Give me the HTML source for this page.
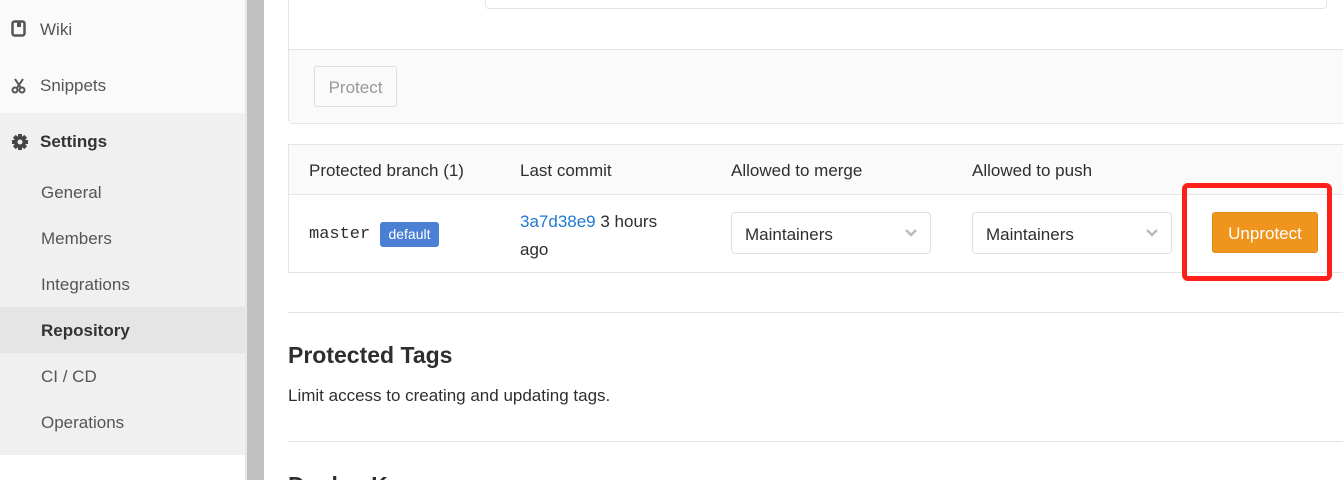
<!DOCTYPE html><html><head><style>
html,body{margin:0;width:1343px;height:480px;overflow:hidden}
body{background:#fff;font-family:"Liberation Sans",sans-serif;color:#2e2e2e;position:relative}
.a{position:absolute}
.nav{font-size:17px;color:#555}
</style></head><body>
<div class="a" style="left:0;top:0;width:245px;height:113px;background:#fafafa"></div>
<div class="a" style="left:0;top:113px;width:245px;height:342px;background:#f0f0f0"></div>
<div class="a" style="left:0;top:307px;width:245px;height:46px;background:#e5e5e5"></div>
<div class="a" style="left:245px;top:0;width:2px;height:480px;background:#e8e8e8"></div>
<div class="a" style="left:247px;top:0;width:17px;height:480px;background:#c1c1c1"></div>
<svg class="a" style="left:11px;top:20px" width="16" height="18"><rect x="1.5" y="1.5" width="12" height="14" rx="2" fill="none" stroke="#555" stroke-width="2.5"/><rect x="6" y="2" width="4" height="5" fill="#555"/></svg>
<div class="a nav" style="left:40px;top:20px">Wiki</div>
<svg class="a" style="left:11px;top:77px" width="16" height="18"><path d="M4 2l6 9M12 2l-6 9" stroke="#555" stroke-width="2"/><circle cx="4" cy="13" r="2.5" fill="none" stroke="#555" stroke-width="2"/><circle cx="11" cy="13" r="2.5" fill="none" stroke="#555" stroke-width="2"/></svg>
<div class="a nav" style="left:40px;top:76px">Snippets</div>
<svg class="a" style="left:11px;top:133px" width="18" height="18" viewBox="0 0 18 18"><g fill="#444"><circle cx="9" cy="9" r="6"/><rect x="7" y="1" width="4" height="16"/><rect x="1" y="7" width="16" height="4"/><rect x="7" y="1" width="4" height="16" transform="rotate(45 9 9)"/><rect x="7" y="1" width="4" height="16" transform="rotate(-45 9 9)"/></g><circle cx="9" cy="9" r="2.5" fill="#f0f0f0"/></svg>
<div class="a nav" style="left:40px;top:132px;font-weight:bold;color:#333">Settings</div>
<div class="a nav" style="left:41px;top:183px">General</div>
<div class="a nav" style="left:41px;top:229px">Members</div>
<div class="a nav" style="left:41px;top:275px">Integrations</div>
<div class="a nav" style="left:41px;top:321px;font-weight:bold;color:#333">Repository</div>
<div class="a nav" style="left:41px;top:367px">CI / CD</div>
<div class="a nav" style="left:41px;top:413px">Operations</div>

<div class="a" style="left:288px;top:-5px;width:1060px;height:127px;border:1px solid #e5e5e5;border-radius:4px;background:#fff"></div>
<div class="a" style="left:289px;top:49px;width:1060px;height:73px;background:#fafafa;border-top:1px solid #e5e5e5"></div>
<div class="a" style="left:485px;top:-5px;width:840px;height:12px;border:1px solid #e5e5e5;border-radius:4px;background:#fff"></div>
<div class="a" style="left:314px;top:66px;width:81px;height:39px;border:1px solid #ddd;border-radius:3px;background:#fafafa;color:#999;font-size:17px;line-height:41px;text-align:center">Protect</div>

<div class="a" style="left:288px;top:144px;width:1060px;height:127px;border:1px solid #e5e5e5"></div>
<div class="a" style="left:289px;top:145px;width:1060px;height:49px;background:#fafafa;border-bottom:1px solid #e5e5e5"></div>
<div class="a" style="left:309px;top:161px;font-size:17px">Protected branch (1)</div>
<div class="a" style="left:520px;top:161px;font-size:17px">Last commit</div>
<div class="a" style="left:731px;top:161px;font-size:17px">Allowed to merge</div>
<div class="a" style="left:972px;top:161px;font-size:17px">Allowed to push</div>
<div class="a" style="left:309px;top:225px;font-family:'Liberation Mono',monospace;font-size:17px">master</div>
<div class="a" style="left:380px;top:222px;width:59px;height:25px;background:#4a7fd4;border-radius:3px;color:#fff;font-size:14px;line-height:25px;text-align:center">default</div>
<div class="a" style="left:520px;top:208px;font-size:17px;line-height:28px;width:170px"><span style="color:#1f78d1">3a7d38e9</span> 3 hours ago</div>
<div class="a" style="left:731px;top:212px;width:198px;height:40px;border:1px solid #e0e0e0;border-radius:4px"></div>
<div class="a" style="left:745px;top:225px;font-size:17px">Maintainers</div>
<div class="a" style="left:972px;top:212px;width:198px;height:40px;border:1px solid #e0e0e0;border-radius:4px"></div>
<div class="a" style="left:986px;top:225px;font-size:17px">Maintainers</div>
<div class="a" style="left:1212px;top:212px;width:104px;height:39px;background:#ef951d;border:1px solid #de8a17;border-radius:3px;color:#fff;font-size:17px;line-height:41px;text-align:center">Unprotect</div>
<div class="a" style="left:1182px;top:183px;width:140px;height:88px;border:5px solid #ff1f1a;border-radius:6px"></div>
<svg class="a" style="left:904px;top:228px" width="14" height="10"><path d="M2 2l5 5 5-5" stroke="#bbb" stroke-width="2.5" fill="none"/></svg>
<svg class="a" style="left:1145px;top:228px" width="14" height="10"><path d="M2 2l5 5 5-5" stroke="#bbb" stroke-width="2.5" fill="none"/></svg>

<div class="a" style="left:288px;top:312px;width:1060px;height:1px;background:#e5e5e5"></div>
<div class="a" style="left:288px;top:342px;font-size:23px;font-weight:bold;color:#2e2e2e">Protected Tags</div>
<div class="a" style="left:288px;top:386px;font-size:17px">Limit access to creating and updating tags.</div>
<div class="a" style="left:288px;top:441px;width:1060px;height:1px;background:#e5e5e5"></div>
<div class="a" style="left:288px;top:472px;font-size:23px;font-weight:bold">Deploy Keys</div>
</body></html>
